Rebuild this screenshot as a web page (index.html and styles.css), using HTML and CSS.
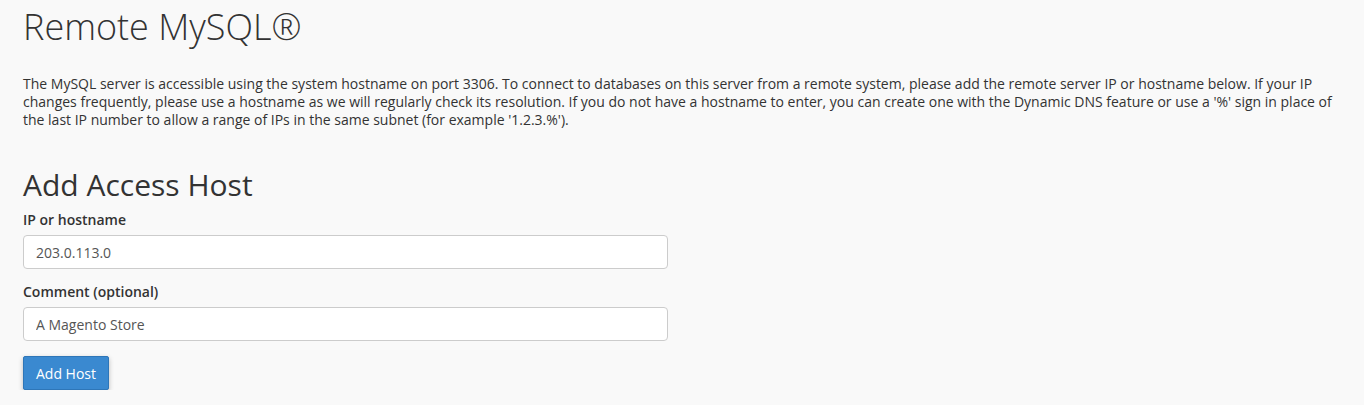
FILE: index.html
```html
<!DOCTYPE html>
<html lang="en">
<head>
    <meta charset="UTF-8">
    <title>Remote MySQL</title>
    <link rel="stylesheet" href="styles.css">
</head>
<body>

    <div class="page">
        <h1 class="page-title">Remote MySQL®</h1>

        <p class="intro">The MySQL server is accessible using the system hostname on port 3306. To connect to databases on this server from a remote system, please add the remote server IP or hostname below. If your IP changes frequently, please use a hostname as we will regularly check its resolution. If you do not have a hostname to enter, you can create one with the Dynamic DNS feature or use a '%' sign in place of the last IP number to allow a range of IPs in the same subnet (for example '1.2.3.%').</p>

        <form class="host-form">
            <h2>Add Access Host</h2>

            <div class="form-group">
                <label for="host">IP or hostname</label>
                <input type="text" id="host" class="form-control" value="203.0.113.0">
            </div>

            <div class="form-group">
                <label for="comment">Comment (optional)</label>
                <input type="text" id="comment" class="form-control" value="A Magento Store">
            </div>

            <button type="button" class="btn-primary">Add Host</button>
        </form>
    </div>

</body>
</html>
```

FILE: styles.css
```css
body {
    margin: 0;
    background-color: #f9f9f9;
    font-family: "Open Sans", Arial, sans-serif;
    font-size: 14px;
    color: #333;
}

.page {
    padding: 0 20px 0 23px;
}

.page-title {
    margin: 0;
    padding-top: 3px;
    font-size: 36px;
    font-weight: 300;
    line-height: 48px;
    color: #333;
}

.intro {
    margin: 24px 0 0;
    line-height: 18px;
}

/* Add host form */
.host-form h2 {
    margin: 36px 0 0;
    font-size: 30px;
    font-weight: 400;
    line-height: 40px;
}

.form-group {
    margin-top: 6px;
    margin-bottom: 14px;
}

.form-group label {
    display: block;
    font-weight: 600;
    line-height: 18px;
    margin-bottom: 6px;
}

.form-control {
    box-sizing: border-box;
    width: 645px;
    height: 34px;
    padding: 6px 12px;
    border: 1px solid #ccc;
    border-radius: 4px;
    background-color: #fff;
    font-family: inherit;
    font-size: 14px;
    color: #555;
}

.btn-primary {
    margin-top: 1px;
    height: 34px;
    padding: 6px 12px;
    border: 1px solid #2e76b8;
    border-radius: 2px;
    background-color: #3a89d0;
    color: #fff;
    font-family: inherit;
    font-size: 14px;
    box-shadow: 0 2px 5px rgba(0, 0, 0, 0.25);
    cursor: pointer;
}
```
